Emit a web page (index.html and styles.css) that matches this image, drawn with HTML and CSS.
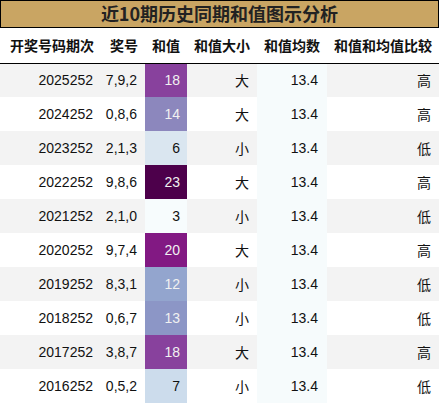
FILE: index.html
```html
<!DOCTYPE html>
<html lang="zh-CN">
<head>
    <meta charset="UTF-8">
    <title>近10期历史同期和值图示分析</title>
    <link rel="stylesheet" href="styles.css">
</head>
<body>
    <div class="report">
        <div class="caption">近10期历史同期和值图示分析</div>
        <table class="sum-table">
            <colgroup>
                <col class="c-issue">
                <col class="c-nums">
                <col class="c-sum">
                <col class="c-size">
                <col class="c-avg">
                <col class="c-cmp">
            </colgroup>
            <thead>
                <tr>
                    <th>开奖号码期次</th>
                    <th>奖号</th>
                    <th>和值</th>
                    <th>和值大小</th>
                    <th>和值均数</th>
                    <th>和值和均值比较</th>
                </tr>
            </thead>
            <tbody>
                <tr><td>2025252</td><td>7,9,2</td><td class="sum dark" style="background:#88419d">18</td><td>大</td><td class="avg">13.4</td><td>高</td></tr>
                <tr><td>2024252</td><td>0,8,6</td><td class="sum dark" style="background:#8c87bd">14</td><td>大</td><td class="avg">13.4</td><td>高</td></tr>
                <tr><td>2023252</td><td>2,1,3</td><td class="sum" style="background:#dae6f0">6</td><td>小</td><td class="avg">13.4</td><td>低</td></tr>
                <tr><td>2022252</td><td>9,8,6</td><td class="sum dark" style="background:#4d004b">23</td><td>大</td><td class="avg">13.4</td><td>高</td></tr>
                <tr><td>2021252</td><td>2,1,0</td><td class="sum" style="background:#f7fcfd">3</td><td>小</td><td class="avg">13.4</td><td>低</td></tr>
                <tr><td>2020252</td><td>9,7,4</td><td class="sum dark" style="background:#821983">20</td><td>大</td><td class="avg">13.4</td><td>高</td></tr>
                <tr><td>2019252</td><td>8,3,1</td><td class="sum dark" style="background:#93a5ce">12</td><td>小</td><td class="avg">13.4</td><td>低</td></tr>
                <tr><td>2018252</td><td>0,6,7</td><td class="sum dark" style="background:#8c96c6">13</td><td>小</td><td class="avg">13.4</td><td>低</td></tr>
                <tr><td>2017252</td><td>3,8,7</td><td class="sum dark" style="background:#88419d">18</td><td>大</td><td class="avg">13.4</td><td>高</td></tr>
                <tr><td>2016252</td><td>0,5,2</td><td class="sum" style="background:#ccdcec">7</td><td>小</td><td class="avg">13.4</td><td>低</td></tr>
            </tbody>
        </table>
    </div>
</body>
</html>
```

FILE: styles.css
```css
* {
    margin: 0;
    padding: 0;
    box-sizing: border-box;
}

body {
    background-color: #fff;
    color: #111;
    font-family: 'Liberation Sans', 'Noto Sans CJK SC', sans-serif;
}

.report {
    width: 439px;
}

.caption {
    height: 28px;
    background-color: #c9a563;
    border: 1px solid #000;
    text-align: center;
    font-family: 'Noto Sans CJK SC', sans-serif;
    font-weight: bold;
    font-size: 18px;
    line-height: 25px;
    color: #222;
}

.sum-table {
    width: 439px;
    border-collapse: collapse;
    table-layout: fixed;
    font-size: 14px;
}

.c-issue { width: 101px; }
.c-nums { width: 44px; }
.c-sum { width: 42px; }
.c-size { width: 70px; }
.c-avg { width: 70px; }
.c-cmp { width: 112px; }

.sum-table th {
    height: 35px;
    padding: 0 7px 0 0;
    text-align: right;
    font-family: 'Noto Sans CJK SC', sans-serif;
    font-weight: bold;
    font-size: 14px;
    color: #111;
    border-bottom: 1px solid #000;
    white-space: nowrap;
}

.sum-table td {
    height: 34px;
    padding: 0 8px 0 0;
    text-align: right;
    white-space: nowrap;
}

.sum-table td.sum {
    padding-right: 7px;
}

.sum-table tbody tr:nth-child(odd) {
    background-color: #f3f3f3;
}

.sum-table td.avg {
    background-color: #f6fbfc;
    padding-right: 9px;
}

.sum-table td.dark {
    color: #f1f1f1;
}
```
